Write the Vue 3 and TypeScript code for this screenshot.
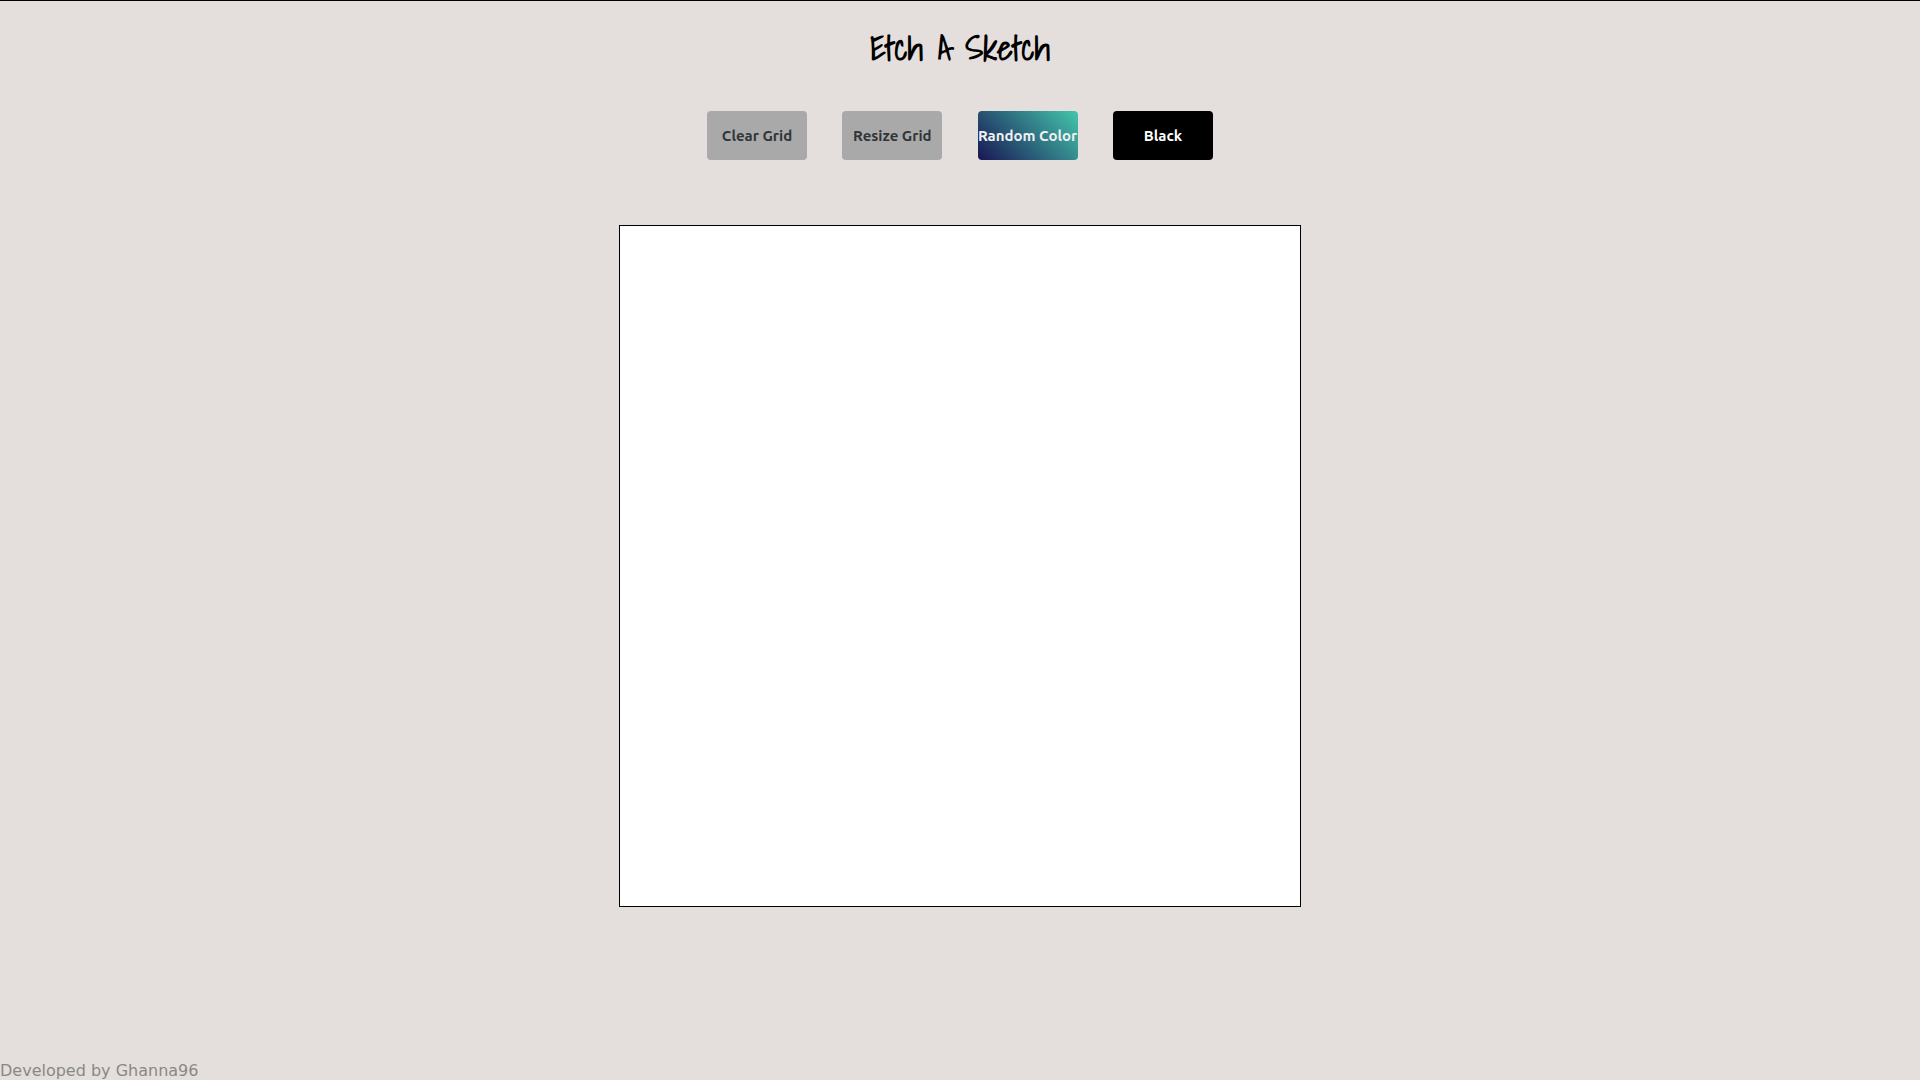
<script setup lang="ts">
import { ref } from 'vue'

type Mode = 'random' | 'black'

const size = ref<number>(16)
const mode = ref<Mode>('black')
const cells = ref<string[]>(blank(size.value))

function blank(n: number): string[] {
  return Array.from({ length: n * n }, () => '#fff')
}

function clearGrid(): void {
  cells.value = blank(size.value)
}

function resizeGrid(): void {
  const answer = Number(window.prompt('Squares per side (1-100)', String(size.value)))
  if (Number.isInteger(answer) && answer >= 1 && answer <= 100) {
    size.value = answer
    clearGrid()
  }
}

function paint(index: number): void {
  cells.value[index] =
    mode.value === 'black' ? '#000' : `hsl(${Math.floor(Math.random() * 360)}, 80%, 50%)`
}
</script>

<template>
  <div class="page">
    <header>
      <h1>Etch A Sketch</h1>
    </header>
    <main>
      <div class="controls">
        <button type="button" @click="clearGrid">Clear Grid</button>
        <button type="button" @click="resizeGrid">Resize Grid</button>
        <button type="button" class="random" @click="mode = 'random'">Random Color</button>
        <button type="button" class="black" @click="mode = 'black'">Black</button>
      </div>
      <div class="board" :style="{ gridTemplateColumns: `repeat(${size}, 1fr)` }">
        <div
          v-for="(color, i) in cells"
          :key="i"
          :style="{ background: color }"
          @mouseenter="paint(i)"
        ></div>
      </div>
    </main>
    <footer>Developed by Ghanna96</footer>
  </div>
</template>

<style>
body {
  margin: 0;
  background: #e4dfdc;
}
</style>

<style scoped>
.page {
  box-sizing: border-box;
  min-height: 100vh;
  display: flex;
  flex-direction: column;
  border-top: 1px solid #000;
}

h1 {
  margin: 23px 0 39px;
  font: 700 33px/48px "Shadows Into Light", "Shadows Into Light Two", "Liberation Sans Narrow", sans-serif;
  text-align: center;
  color: #000;
}

main {
  flex: 1;
  display: flex;
  flex-direction: column;
  align-items: center;
}

.controls {
  display: flex;
  justify-content: space-between;
  width: 100%;
  max-width: 506px;
  margin-bottom: 65px;
}

button {
  width: 100px;
  height: 49px;
  padding: 0;
  border: 0;
  border-radius: 4px;
  background: #a9a9a9;
  color: #2f3538;
  font: 700 15px/20px "Ubuntu", "Noto Sans", sans-serif;
  white-space: nowrap;
  cursor: pointer;
}

.random {
  background: linear-gradient(45deg, #191654, #43c6ac);
  color: #f0f0f0;
}

.black {
  background: #000;
  color: #fff;
}

.board {
  box-sizing: border-box;
  display: grid;
  width: 100%;
  max-width: 682px;
  aspect-ratio: 1;
  border: 1px solid #000;
  background: #fff;
}

footer {
  font: 16px/19px "DejaVu Sans", sans-serif;
  color: #8a8886;
}
</style>
